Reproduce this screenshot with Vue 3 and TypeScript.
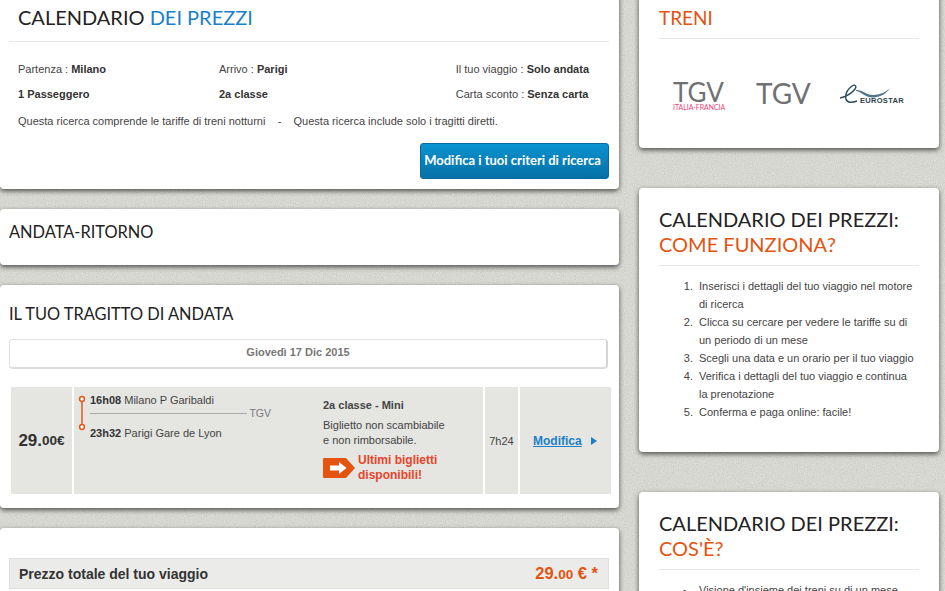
<script setup lang="ts">
interface Train {
  time: string
  station: string
}

const from: Train = { time: '16h08', station: 'Milano P Garibaldi' }
const to: Train = { time: '23h32', station: 'Parigi Gare de Lyon' }

const howItWorks = [
  'Inserisci i dettagli del tuo viaggio nel motore di ricerca',
  'Clicca su cercare per vedere le tariffe su di un periodo di un mese',
  'Scegli una data e un orario per il tuo viaggio',
  'Verifica i dettagli del tuo viaggio e continua la prenotazione',
  'Conferma e paga online: facile!',
]
</script>

<template>
  <div class="page">
    <!-- paper texture behind the cards -->
    <svg class="texture" width="945" height="591">
      <filter id="grain">
        <feTurbulence type="fractalNoise" baseFrequency="0.9" numOctaves="2" seed="4" />
        <feColorMatrix type="matrix" values="0 0 0 0 0.35  0 0 0 0 0.35  0 0 0 0 0.32  0.5 0 0 0 -0.12" />
      </filter>
      <rect width="945" height="591" filter="url(#grain)" />
    </svg>

    <main class="col-main">
      <section class="card card-search">
        <h2 class="title title-search">CALENDARIO <span class="blue">DEI PREZZI</span></h2>
        <div class="criteria">
          <span>Partenza : <b>Milano</b></span>
          <span>Arrivo : <b>Parigi</b></span>
          <span class="end">Il tuo viaggio : <b>Solo andata</b></span>
          <span><b>1 Passeggero</b></span>
          <span><b>2a classe</b></span>
          <span class="end">Carta sconto : <b>Senza carta</b></span>
        </div>
        <p class="note">Questa ricerca comprende le tariffe di treni notturni &nbsp;&nbsp; - &nbsp;&nbsp; Questa ricerca include solo i tragitti diretti.</p>
        <div class="actions">
          <button class="btn-edit">Modifica i tuoi criteri di ricerca</button>
        </div>
      </section>

      <section class="card card-trip-type">
        <h2 class="title">ANDATA-RITORNO</h2>
      </section>

      <section class="card card-outbound">
        <h2 class="title">IL TUO TRAGITTO DI ANDATA</h2>
        <div class="date-bar">Giovedì 17 Dic 2015</div>
        <div class="trip">
          <div class="cell price">29.<small>00€</small></div>
          <div class="cell detail">
            <div class="route">
              <svg class="route-line" width="10" height="36" viewBox="0 0 10 36">
                <line x1="5" y1="6" x2="5" y2="30" stroke="#e2571a" stroke-width="1.5" />
                <circle cx="5" cy="4" r="2.4" fill="#fff" stroke="#e2571a" stroke-width="1.5" />
                <circle cx="5" cy="32" r="2.4" fill="#fff" stroke="#e2571a" stroke-width="1.5" />
              </svg>
              <div class="stops">
                <div class="stop"><b>{{ from.time }}</b> {{ from.station }}</div>
                <div class="carrier"><i></i><span>TGV</span></div>
                <div class="stop"><b>{{ to.time }}</b> {{ to.station }}</div>
              </div>
            </div>
            <div class="fare">
              <div class="fare-name">2a classe - Mini</div>
              <p>Biglietto non scambiabile<br />e non rimborsabile.</p>
              <div class="last-tickets">
                <svg width="32" height="20" viewBox="0 0 32 20">
                  <path d="M1 0H23L32 10L23 20H1Q0 20 0 19V1Q0 0 1 0Z" fill="#e2540f" />
                  <path d="M7 7.5H16V4L23.5 10L16 16V12.5H7Z" fill="#fff" />
                </svg>
                <span>Ultimi biglietti<br />disponibili!</span>
              </div>
            </div>
          </div>
          <div class="cell duration">7h24</div>
          <div class="cell change">
            <a href="#">Modifica</a>
            <i class="tri"></i>
          </div>
        </div>
      </section>

      <section class="card card-total">
        <div class="total">
          <span>Prezzo totale del tuo viaggio</span>
          <span class="total-price">29.<small>00</small> € *</span>
        </div>
      </section>
    </main>

    <aside class="col-side">
      <section class="card card-trains">
        <h2 class="title title-side orange">TRENI</h2>
        <div class="logos">
          <div class="logo-tgv">
            <span class="tgv tgv-small">TGV</span>
            <span class="tgv-sub">ITALIA-FRANCIA</span>
          </div>
          <span class="tgv tgv-big">TGV</span>
          <div class="logo-eurostar">
            <svg width="62" height="22" viewBox="0 0 62 22">
              <path d="M1 14C6 13 12 10 16 5C18 2 16 0 13 2C9 5 6 10 7 15C8 19 13 19 18 17" fill="none" stroke="#274a5c" stroke-width="1.4" />
              <path d="M17 6C24 6 27 11 34 11C41 11 47 8 51 4C47 10 41 13.5 34 13.5C26 13.5 23 8 17 7Z" fill="#4d7686" />
            </svg>
            <span>EUROSTAR</span>
          </div>
        </div>
      </section>

      <section class="card card-info">
        <h2 class="title title-info">CALENDARIO DEI PREZZI:<br /><span class="orange">COME FUNZIONA?</span></h2>
        <ol class="steps">
          <li v-for="step in howItWorks" :key="step">{{ step }}</li>
        </ol>
      </section>

      <section class="card card-info">
        <h2 class="title title-info">CALENDARIO DEI PREZZI:<br /><span class="orange">COS'È?</span></h2>
        <ul class="steps">
          <li>Visione d'insieme dei treni su di un mese</li>
        </ul>
      </section>
    </aside>
  </div>
</template>

<style scoped>
.page {
  position: relative;
  display: flex;
  gap: 20px;
  align-items: flex-start;
  height: 591px;
  overflow: hidden;
  background-color: #dfdfd9;
  font-family: "Liberation Sans", Arial, sans-serif;
  font-size: 11px;
  color: #444;
}

.texture {
  position: absolute;
  left: 0;
  top: 0;
}

.col-main {
  position: relative;
  width: 619px;
  flex: none;
  display: flex;
  flex-direction: column;
  gap: 20px;
  margin-top: -10px;
}

.col-side {
  position: relative;
  width: 300px;
  flex: none;
  display: flex;
  flex-direction: column;
  gap: 40px;
  margin-top: -10px;
}

.card {
  flex: none;
  background: #fff;
  border-radius: 4px;
  box-shadow: 0 2px 5px rgba(0, 0, 0, 0.65);
  box-sizing: border-box;
}

.title {
  margin: 0;
  font-family: Lato, "Liberation Sans", sans-serif;
  font-weight: 400;
  font-size: 16.4px;
  color: #222;
}

.blue { color: #1a80c8; }
.orange { color: #e2540f; }

.card-search {
  height: 199px;
  padding: 0 10px 0 9px;
}

.title-search {
  font-size: 20px;
  line-height: 24px;
  padding: 15px 0 12px 9px;
  border-bottom: 1px solid #e6e6e6;
}

.criteria {
  display: grid;
  grid-template-columns: 201px 1fr auto;
  grid-auto-rows: 25px;
  padding: 15px 20px 0 9px;
  line-height: 25px;
}

.criteria b, .stop b { color: #333; }

.note {
  margin: 0;
  padding: 7px 0 0 9px;
  line-height: 14px;
}

.actions {
  display: flex;
  justify-content: flex-end;
  padding-top: 15px;
}

.btn-edit {
  width: 189px;
  height: 36px;
  padding: 0 4px 3px 0;
  border: 1px solid #0a6aa0;
  border-radius: 3px;
  background: linear-gradient(#0a93cf, #0670a6);
  color: #fff;
  font-family: Lato, "Liberation Sans", sans-serif;
  font-weight: 700;
  font-size: 13px;
}

.card-trip-type {
  height: 56px;
  padding: 13px 9px;
}

.card-trip-type .title, .card-outbound .title {
  line-height: 20px;
}

.card-outbound {
  height: 223px;
  padding: 19px 11px 0 9px;
}

.date-bar {
  margin-top: 15px;
  height: 30px;
  padding-right: 20px;
  box-sizing: border-box;
  border: 1px solid #e2e2e2;
  border-right: 2px solid #d5d5d5;
  border-bottom: 2px solid #dcdcdc;
  border-radius: 4px;
  text-align: center;
  line-height: 25px;
  font-weight: 700;
  color: #777;
}

.trip {
  display: flex;
  gap: 2px;
  height: 107px;
  margin: 18px -3px 0 2px;
}

.cell {
  background: #e5e5e1;
  display: flex;
  align-items: center;
}

.price {
  width: 61px;
  justify-content: center;
  font-size: 17px;
  font-weight: 700;
  color: #333;
}

.price small { font-size: 13.5px; }

.detail {
  width: 409px;
  align-items: flex-start;
}

.route {
  width: 249px;
  display: flex;
  padding: 6px 0 0 3px;
  box-sizing: border-box;
}

.route-line { flex: none; margin-top: 2px; }

.stops {
  flex: 1;
  margin-left: 3px;
  margin-right: 52px;
}

.stop { line-height: 14px; }

.carrier {
  display: flex;
  align-items: center;
  height: 10px;
  margin: 1px 0 8px;
  color: #777;
}

.carrier i {
  flex: 1;
  border-top: 1px solid #aaa;
}

.carrier span { margin-left: 2px; font-size: 10.5px; }

.fare { padding-top: 11px; }

.fare-name { font-weight: 700; line-height: 14px; }

.fare p {
  margin: 6px 0 0;
  line-height: 15px;
}

.last-tickets {
  display: flex;
  align-items: center;
  gap: 3px;
  margin-top: 5px;
  color: #e8442a;
  font-size: 12px;
  font-weight: 700;
  line-height: 15px;
}

.duration {
  width: 33px;
  justify-content: center;
}

.change {
  width: 91px;
  padding-left: 13px;
  box-sizing: border-box;
}

.change a {
  color: #1a80c8;
  font-size: 12px;
  font-weight: 700;
}

.tri {
  margin-left: 9px;
  border-left: 6px solid #1a80c8;
  border-top: 4px solid transparent;
  border-bottom: 4px solid transparent;
}

.card-total {
  height: 200px;
  padding: 30px 10px 0 9px;
}

.total {
  display: flex;
  justify-content: space-between;
  align-items: center;
  height: 31px;
  padding: 0 10px 0 9px;
  box-sizing: border-box;
  background: #ebebe9;
  border: 1px solid #e0e0e0;
  font-size: 14px;
  font-weight: 700;
  color: #333;
}

.total-price {
  font-size: 16.5px;
  color: #e2540f;
}

.total-price small { font-size: 13.5px; }

.card-trains {
  height: 158px;
  padding: 16px 20px 0;
}

.title-side {
  font-size: 19px;
  line-height: 24px;
  padding-bottom: 8px;
  border-bottom: 1px solid #e6e6e6;
}

.logos {
  display: flex;
  align-items: flex-start;
  padding: 42px 0 0 14px;
}

.logo-tgv {
  width: 83px;
  display: flex;
  flex-direction: column;
}

.tgv {
  font-family: Lato, "Liberation Sans", sans-serif;
  font-size: 28px;
  line-height: 24px;
  color: #6f7072;
}

.tgv-small { font-size: 26px; line-height: 23px; }

.tgv-big { width: 83px; }

.tgv-sub {
  font-family: Lato, "Liberation Sans", sans-serif;
  font-size: 6.9px;
  line-height: 6px;
  color: #ec3f7c;
}

.logo-eurostar {
  position: relative;
  width: 62px;
  height: 22px;
  margin-top: 3px;
}

.logo-eurostar svg { display: block; }

.logo-eurostar span {
  position: absolute;
  left: 21px;
  top: 12px;
  font-size: 7.5px;
  font-weight: 700;
  color: #2b3f4c;
  letter-spacing: 0.3px;
}

.card-info {
  padding: 19px 20px 0;
  height: 264px;
}

.title-info {
  font-size: 20px;
  line-height: 25px;
  padding-bottom: 8px;
  border-bottom: 1px solid #e6e6e6;
}

.steps {
  margin: 11px 0 0;
  padding: 0 4px 0 37px;
  line-height: 18px;
  color: #444;
}

.steps li { padding-left: 3px; }
</style>

<style>
html, body { margin: 0; overflow: hidden; }
</style>
